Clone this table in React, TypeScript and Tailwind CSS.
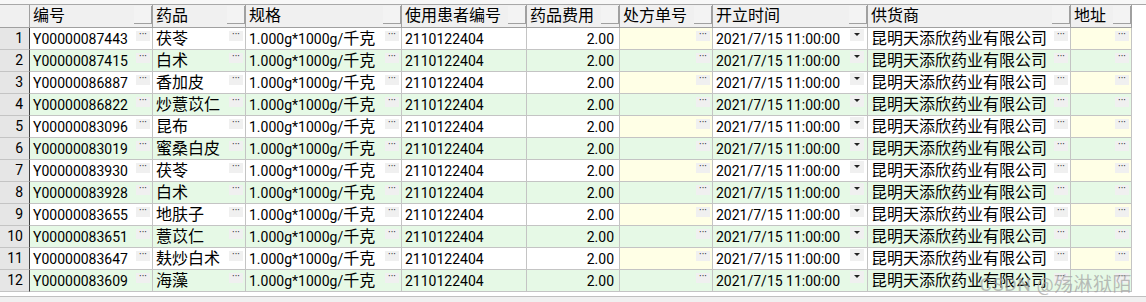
const cols = [
    { key: "code", title: "编号", w: 123, btn: "dots" },
    { key: "drug", title: "药品", w: 93, btn: "dots" },
    { key: "spec", title: "规格", w: 156, btn: "dots" },
    { key: "patient", title: "使用患者编号", w: 125, btn: "" },
    { key: "fee", title: "药品费用", w: 93, btn: "", right: true },
    { key: "rx", title: "处方单号", w: 93, btn: "dots", yellow: true },
    { key: "time", title: "开立时间", w: 155, btn: "drop" },
    { key: "supplier", title: "供货商", w: 203, btn: "dots" },
    { key: "addr", title: "地址", w: 61, btn: "dots", yellow: true },
];

const items: [string, string][] = [
    ["Y00000087443", "茯苓"],
    ["Y00000087415", "白术"],
    ["Y00000086887", "香加皮"],
    ["Y00000086822", "炒薏苡仁"],
    ["Y00000083096", "昆布"],
    ["Y00000083019", "蜜桑白皮"],
    ["Y00000083930", "茯苓"],
    ["Y00000083928", "白术"],
    ["Y00000083655", "地肤子"],
    ["Y00000083651", "薏苡仁"],
    ["Y00000083647", "麸炒白术"],
    ["Y00000083609", "海藻"],
];

const rows = items.map(([code, drug]) => ({
    code,
    drug,
    spec: "1.000g*1000g/千克",
    patient: "2110122404",
    fee: "2.00",
    rx: "",
    time: "2021/7/15 11:00:00",
    supplier: "昆明天添欣药业有限公司",
    addr: "",
}));

// CJK glyphs are drawn larger than latin ones in the original grid
function Txt({ text }: { text: string }) {
    const parts = text.split(/([\u4e00-\u9fff]+)/).filter(Boolean);
    return (
        <>
            {parts.map((p, i) =>
                /[\u4e00-\u9fff]/.test(p) ? (
                    <span key={i} className="text-[16px]">{p}</span>
                ) : (
                    <span key={i}>{p}</span>
                )
            )}
        </>
    );
}

function CellButton({ kind }: { kind: string }) {
    if (kind === "dots") {
        return (
            <div className="absolute right-[2px] top-[3px] w-[14px] h-[10px] bg-[#f0f0f0] flex justify-center">
                <span className="text-[10px] leading-[7px] text-[#222]">···</span>
            </div>
        );
    }
    if (kind === "drop") {
        return (
            <div className="absolute right-[3px] top-[1px] w-[14px] h-[12px] bg-[#f0f0f0] flex justify-center pt-[4px]">
                <div className="w-0 h-0 border-l-[3px] border-r-[3px] border-t-[3px] border-l-transparent border-r-transparent border-t-[#222]" />
            </div>
        );
    }
    return null;
}

export default function App() {
    return (
        <div
            className="relative w-[1146px] h-[302px] bg-white overflow-hidden text-black text-[14px]"
            style={{ fontFamily: 'Roboto, "Noto Sans CJK SC", sans-serif' }}
        >
            <div className="h-[5px] bg-[#f7f7f7] border-b border-[#a8a8a8]" />

            <div className="flex h-[23px]">
                <div className="w-[30px] shrink-0 bg-[#f0f0f0] border-r border-b border-[#a0a0a0]" />
                {cols.map((c) => (
                    <div
                        key={c.key}
                        style={{ width: c.w }}
                        className="relative shrink-0 bg-[#f0f0f0] border-r border-b border-[#a0a0a0] pl-[3px] flex items-center leading-none"
                    >
                        <Txt text={c.title} />
                        <div className="absolute right-0 top-[1px] w-[18px] h-[18px] bg-[#f3f3f3] border-r border-b border-[#a0a0a0]" />
                    </div>
                ))}
            </div>

            {rows.map((r, i) => {
                const even = i % 2 === 1;
                return (
                    <div key={i} className="flex h-[22px]">
                        <div className="w-[30px] shrink-0 bg-[#e6e6e6] border-r border-b border-r-[#404040] border-b-[#c4c4c4] flex items-center justify-end pr-[6px]">
                            {i + 1}
                        </div>
                        {cols.map((c) => {
                            const bg = even ? "bg-[#e6f9e6]" : c.yellow ? "bg-[#ffffe6]" : "bg-white";
                            return (
                                <div
                                    key={c.key}
                                    style={{ width: c.w }}
                                    className={`relative shrink-0 ${bg} border-r border-b border-[#c4c4c4] flex items-center whitespace-nowrap leading-none ${c.right ? "justify-end pr-[5px]" : "pl-[3px]"}`}
                                >
                                    <Txt text={(r as Record<string, string>)[c.key]} />
                                    <CellButton kind={c.btn} />
                                </div>
                            );
                        })}
                    </div>
                );
            })}

            <div className="h-[4px]" />
            <div className="h-[6px] bg-[#f0f0f0] border-t border-[#c0c0c0]" />

            {/* watermark over the last rows */}
            <div className="absolute right-[14px] bottom-[8px] text-[19px] leading-none text-[#a0a0a0]/70 tracking-[0.5px] pointer-events-none">
                CSDN @殇淋狱陌
            </div>
        </div>
    );
}
